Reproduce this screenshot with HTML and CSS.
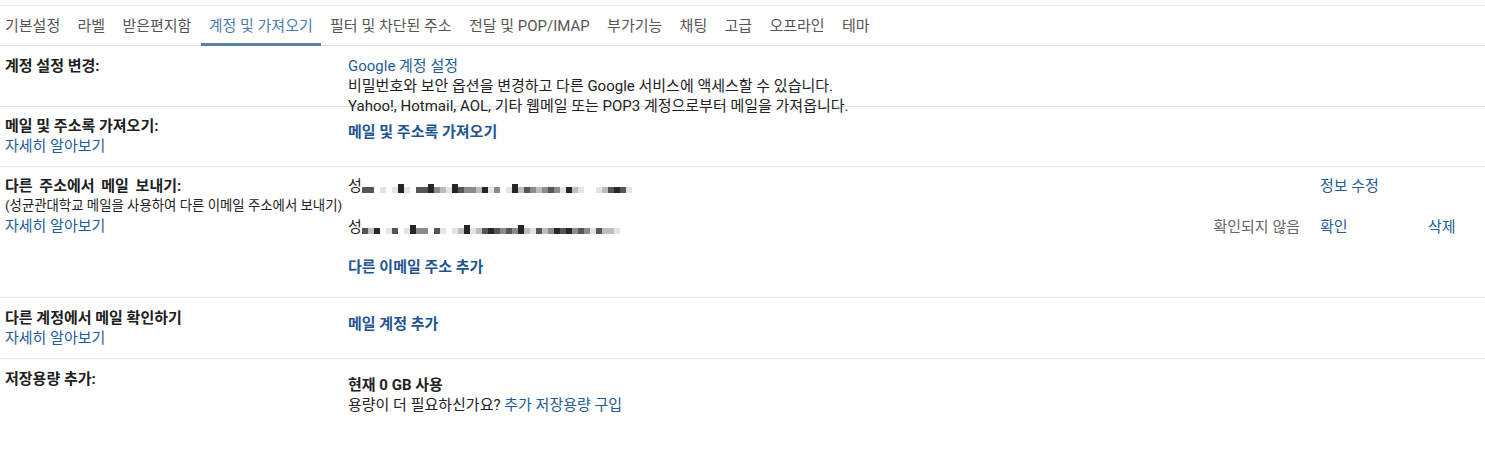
FILE: index.html
```html
<!DOCTYPE html>
<html lang="ko">
<head>
<meta charset="utf-8">
<title>설정 - 계정 및 가져오기</title>
<link rel="stylesheet" href="styles.css">
</head>
<body>
<div class="page">
  <nav class="tabs">
    <a class="tab">기본설정</a>
    <a class="tab">라벨</a>
    <a class="tab">받은편지함</a>
    <a class="tab active">계정 및 가져오기</a>
    <a class="tab">필터 및 차단된 주소</a>
    <a class="tab">전달 및 POP/IMAP</a>
    <a class="tab">부가기능</a>
    <a class="tab">채팅</a>
    <a class="tab">고급</a>
    <a class="tab">오프라인</a>
    <a class="tab">테마</a>
  </nav>

  <section class="row r1">
    <div class="label"><b>계정 설정 변경:</b></div>
    <div class="value">
      <a class="link">Google 계정 설정</a>
      <div>비밀번호와 보안 옵션을 변경하고 다른 Google 서비스에 액세스할 수 있습니다.</div>
    </div>
  </section>

  <section class="row r2">
    <div class="label">
      <b>메일 및 주소록 가져오기:</b>
      <a class="link">자세히 알아보기</a>
    </div>
    <div class="value">
      <div class="lifted">Yahoo!, Hotmail, AOL, 기타 웹메일 또는 POP3 계정으로부터 메일을 가져옵니다.</div>
      <a class="link strong offset">메일 및 주소록 가져오기</a>
    </div>
  </section>

  <section class="row r3">
    <div class="label">
      <b class="wide">다른 주소에서 메일 보내기:</b>
      <span class="sub">(성균관대학교 메일을 사용하여 다른 이메일 주소에서 보내기)</span>
      <a class="link">자세히 알아보기</a>
    </div>
    <div class="value">
      <div class="senders">
        <div class="addr">성<span class="blur"><i class="c2"></i><i class="c2"></i><i class="c0"></i><i class="c5"></i><i class="c0"></i><i class="c5"></i><i class="c1 t"></i><i class="c5"></i><i class="c0"></i><i class="c2"></i><i class="c2"></i><i class="c1 t"></i><i class="c3"></i><i class="c4"></i><i class="c5"></i><i class="c1 t"></i><i class="c2"></i><i class="c3"></i><i class="c3"></i><i class="c4"></i><i class="c1"></i><i class="c5"></i><i class="c3"></i><i class="c0"></i><i class="c5"></i><i class="c1 t"></i><i class="c4"></i><i class="c2"></i><i class="c3"></i><i class="c4"></i><i class="c3"></i><i class="c2"></i><i class="c3"></i><i class="c5"></i><i class="c1"></i><i class="c4"></i><i class="c5"></i><i class="c0"></i><i class="c0"></i><i class="c5"></i><i class="c4"></i><i class="c2"></i><i class="c1"></i><i class="c2"></i><i class="c5"></i></span></div>
        <div></div>
        <a class="link act">정보 수정</a>
        <div></div>

        <div class="addr">성<span class="blur"><i class="c2"></i><i class="c4"></i><i class="c1"></i><i class="c0"></i><i class="c5"></i><i class="c2"></i><i class="c0"></i><i class="c5"></i><i class="c1 t"></i><i class="c3"></i><i class="c3"></i><i class="c0"></i><i class="c2"></i><i class="c5"></i><i class="c0"></i><i class="c5"></i><i class="c4"></i><i class="c1 t"></i><i class="c5"></i><i class="c4"></i><i class="c2"></i><i class="c1"></i><i class="c2"></i><i class="c3"></i><i class="c2"></i><i class="c3"></i><i class="c1 t"></i><i class="c4"></i><i class="c5"></i><i class="c2"></i><i class="c4"></i><i class="c3"></i><i class="c1"></i><i class="c2"></i><i class="c1"></i><i class="c3"></i><i class="c2"></i><i class="c3"></i><i class="c5"></i><i class="c2"></i><i class="c4"></i><i class="c4"></i><i class="c5"></i></span></div>
        <div class="status">확인되지 않음</div>
        <a class="link act">확인</a>
        <a class="link act">삭제</a>
      </div>
      <a class="link strong add">다른 이메일 주소 추가</a>
    </div>
  </section>

  <section class="row r4">
    <div class="label">
      <b>다른 계정에서 메일 확인하기</b>
      <a class="link">자세히 알아보기</a>
    </div>
    <div class="value">
      <a class="link strong offset">메일 계정 추가</a>
    </div>
  </section>

  <section class="row r5">
    <div class="label"><b>저장용량 추가:</b></div>
    <div class="value">
      <b class="offset">현재 0 GB 사용</b>
      <div>용량이 더 필요하신가요? <a class="link">추가 저장용량 구입</a></div>
    </div>
  </section>
</div>
</body>
</html>
```

FILE: styles.css
```css
html, body {
  margin: 0;
  padding: 0;
  background: #ffffff;
}

body {
  font-family: Roboto, "Noto Sans CJK KR", sans-serif;
  font-size: 15px;
  line-height: 20px;
  color: #222222;
}

.page {
  padding-top: 5px;
}

.tabs {
  display: flex;
  border-top: 1px solid #ececec;
  border-bottom: 1px solid #e3e3e3;
  padding-left: 5px;
  height: 39px;
}

.tab {
  display: block;
  padding: 10px 8px 7px;
  margin-bottom: -1px;
  border-bottom: 3px solid transparent;
  color: #555555;
  white-space: nowrap;
  cursor: pointer;
}

.tab + .tab {
  margin-left: 1.3px;
}

.tab:first-child {
  margin-left: -8px;
}

.tab.active {
  color: #4a7cb0;
  border-bottom-color: #5a80a8;
}

.row {
  display: grid;
  grid-template-columns: 343px 1fr;
  padding-left: 5px;
  border-bottom: 1px solid #e3e3e3;
}

.row.r1 { padding-top: 10px; padding-bottom: 10px; }
.row.r2 { padding-top: 9px; padding-bottom: 10px; }
.row.r3 { padding-top: 9px; padding-bottom: 20px; }
.row.r4 { padding-top: 10px; padding-bottom: 10px; }
.row.r5 { padding-top: 10px; padding-bottom: 10px; border-bottom: none; }

.label {
  display: flex;
  flex-direction: column;
  align-items: flex-start;
}

.label b {
  font-weight: 700;
  color: #202020;
}

.label b.wide {
  word-spacing: 3px;
}

.sub {
  font-size: 13.4px;
  color: #222222;
}

.value {
  display: flex;
  flex-direction: column;
  align-items: flex-start;
}

.link {
  color: #245c99;
  cursor: pointer;
  text-decoration: none;
}

.link.strong {
  font-weight: 700;
  color: #1f5593;
}

.lifted {
  margin-top: -20px;
}

.offset {
  margin-top: 6px;
}

.senders {
  align-self: stretch;
  display: grid;
  grid-template-columns: 1fr auto 108px 57px;
  row-gap: 21px;
}

.status {
  color: #666666;
  padding-right: 20px;
}

.add {
  margin-top: 20px;
}

.addr {
  display: flex;
  align-items: center;
  white-space: nowrap;
}

.blur {
  display: inline-flex;
  align-items: flex-end;
  height: 10px;
  margin-top: 3px;
}

.blur i {
  display: block;
  width: 6px;
  height: 6px;
}

.blur i.t { height: 9px; }

.c0 { background: transparent; }
.c1 { background: #262626; }
.c2 { background: #555555; }
.c3 { background: #8c8c8c; }
.c4 { background: #bdbdbd; }
.c5 { background: #e4e4e4; }
```
